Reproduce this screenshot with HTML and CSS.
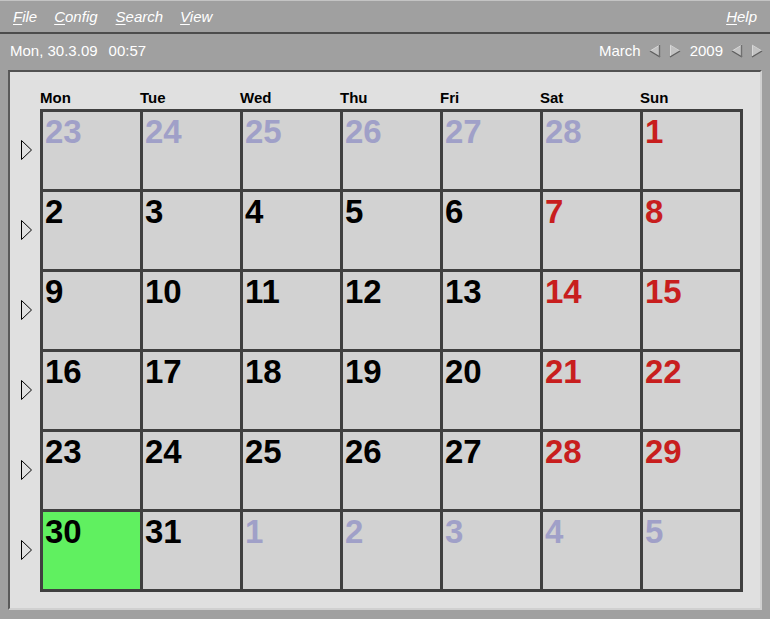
FILE: index.html
```html
<!DOCTYPE html>
<html>
<head>
<meta charset="utf-8">
<link rel="stylesheet" href="styles.css">
</head>
<body>
<div class="menubar">
  <span class="menu m-file"><u>F</u>ile</span>
  <span class="menu m-config"><u>C</u>onfig</span>
  <span class="menu m-search"><u>S</u>earch</span>
  <span class="menu m-view"><u>V</u>iew</span>
  <span class="menu m-help"><u>H</u>elp</span>
</div>
<div class="datebar">
  <span class="date">Mon, 30.3.09</span>
  <span class="time">00:57</span>
  <span class="spacer"></span>
  <span class="month">March</span>
  <svg class="arr" width="12" height="14" viewBox="0 0 12 14"><polygon points="1,7 11,1 11,13" fill="#c2c2c2"/><line x1="1" y1="7" x2="11" y2="1" stroke="#d8d8d8" stroke-width="1"/><line x1="1" y1="7" x2="11" y2="13" stroke="#5e5e5e" stroke-width="1.4"/><line x1="10.5" y1="1" x2="10.5" y2="13" stroke="#707070" stroke-width="1.4"/></svg>
  <svg class="arr" width="12" height="14" viewBox="0 0 12 14"><polygon points="11,7 1,1 1,13" fill="#c2c2c2"/><line x1="1.5" y1="1" x2="1.5" y2="13" stroke="#d8d8d8" stroke-width="1"/><line x1="1" y1="1" x2="11" y2="7" stroke="#d0d0d0" stroke-width="1"/><line x1="1" y1="13" x2="11" y2="7" stroke="#5e5e5e" stroke-width="1.4"/></svg>
  <span class="year">2009</span>
  <svg class="arr" width="12" height="14" viewBox="0 0 12 14"><polygon points="1,7 11,1 11,13" fill="#c2c2c2"/><line x1="1" y1="7" x2="11" y2="1" stroke="#d8d8d8" stroke-width="1"/><line x1="1" y1="7" x2="11" y2="13" stroke="#5e5e5e" stroke-width="1.4"/><line x1="10.5" y1="1" x2="10.5" y2="13" stroke="#707070" stroke-width="1.4"/></svg>
  <svg class="arr" width="12" height="14" viewBox="0 0 12 14"><polygon points="11,7 1,1 1,13" fill="#c2c2c2"/><line x1="1.5" y1="1" x2="1.5" y2="13" stroke="#d8d8d8" stroke-width="1"/><line x1="1" y1="1" x2="11" y2="7" stroke="#d0d0d0" stroke-width="1"/><line x1="1" y1="13" x2="11" y2="7" stroke="#5e5e5e" stroke-width="1.4"/></svg>
</div>
<div class="panel">
  <div class="heads">
    <span class="head">Mon</span><span class="head">Tue</span><span class="head">Wed</span><span class="head">Thu</span><span class="head">Fri</span><span class="head">Sat</span><span class="head">Sun</span>
  </div>
  <div class="body">
    <div class="weeks">
      <div class="wk"><svg width="11" height="20" viewBox="0 0 11 20"><polygon points="0.5,0.5 10.5,10 0.5,19.5" fill="none" stroke="#000" stroke-width="1"/></svg></div>
      <div class="wk"><svg width="11" height="20" viewBox="0 0 11 20"><polygon points="0.5,0.5 10.5,10 0.5,19.5" fill="none" stroke="#000" stroke-width="1"/></svg></div>
      <div class="wk"><svg width="11" height="20" viewBox="0 0 11 20"><polygon points="0.5,0.5 10.5,10 0.5,19.5" fill="none" stroke="#000" stroke-width="1"/></svg></div>
      <div class="wk"><svg width="11" height="20" viewBox="0 0 11 20"><polygon points="0.5,0.5 10.5,10 0.5,19.5" fill="none" stroke="#000" stroke-width="1"/></svg></div>
      <div class="wk"><svg width="11" height="20" viewBox="0 0 11 20"><polygon points="0.5,0.5 10.5,10 0.5,19.5" fill="none" stroke="#000" stroke-width="1"/></svg></div>
      <div class="wk"><svg width="11" height="20" viewBox="0 0 11 20"><polygon points="0.5,0.5 10.5,10 0.5,19.5" fill="none" stroke="#000" stroke-width="1"/></svg></div>
    </div>
    <div class="grid">
      <div class="cell other">23</div><div class="cell other">24</div><div class="cell other">25</div><div class="cell other">26</div><div class="cell other">27</div><div class="cell other">28</div><div class="cell red">1</div>
      <div class="cell">2</div><div class="cell">3</div><div class="cell">4</div><div class="cell">5</div><div class="cell">6</div><div class="cell red">7</div><div class="cell red">8</div>
      <div class="cell">9</div><div class="cell">10</div><div class="cell">11</div><div class="cell">12</div><div class="cell">13</div><div class="cell red">14</div><div class="cell red">15</div>
      <div class="cell">16</div><div class="cell">17</div><div class="cell">18</div><div class="cell">19</div><div class="cell">20</div><div class="cell red">21</div><div class="cell red">22</div>
      <div class="cell">23</div><div class="cell">24</div><div class="cell">25</div><div class="cell">26</div><div class="cell">27</div><div class="cell red">28</div><div class="cell red">29</div>
      <div class="cell today">30</div><div class="cell">31</div><div class="cell other">1</div><div class="cell other">2</div><div class="cell other">3</div><div class="cell other">4</div><div class="cell other">5</div>
    </div>
  </div>
</div>
</body>
</html>
```
FILE: styles.css
```css
html, body {
  margin: 0;
  padding: 0;
}
body {
  background: #a0a0a0;
  width: 770px;
  height: 619px;
  overflow: hidden;
  font-family: "Liberation Sans", Arial, sans-serif;
  font-size: 15px;
  color: #ffffff;
}
.menubar {
  display: flex;
  height: 31px;
  line-height: 31px;
  border-top: 1px solid #c4c4c4;
  border-bottom: 2px solid #4c4c4c;
  padding: 0 13px 0 13px;
}
.menu {
  font-style: italic;
  color: #ffffff;
}
.menu u {
  text-underline-offset: 2px;
}
.m-config { margin-left: 17px; }
.m-search { margin-left: 18px; }
.m-view { margin-left: 17px; }
.m-help { margin-left: auto; }
.datebar {
  display: flex;
  align-items: center;
  height: 36px;
  padding: 0 7px 2px 10px;
  box-sizing: border-box;
  line-height: 34px;
}
.time { margin-left: 11px; }
.spacer { flex: 1; }
.arr { display: block; margin-left: 8px; }
.year { margin-left: 9px; }
.panel {
  margin: 0 8px;
  width: 750px;
  height: 536px;
  background: #e0e0e0;
  border-top: 2px solid #525252;
  border-left: 2px solid #5a5a5a;
  border-right: 2px solid #d0d0d0;
  border-bottom: 2px solid #d0d0d0;
  color: #000;
}
.heads {
  display: flex;
  padding: 18px 0 4px 30px;
  height: 15px;
  line-height: 15px;
  font-weight: bold;
  font-size: 15px;
}
.head {
  width: 100px;
}
.body {
  display: flex;
}
.weeks {
  width: 30px;
  display: flex;
  flex-direction: column;
}
.wk {
  height: 80px;
  padding-top: 1px;
  box-sizing: border-box;
  display: flex;
  align-items: center;
  padding-left: 11px;
}
.wk svg { display: block; }
.grid {
  display: grid;
  grid-template-columns: repeat(7, 97px);
  grid-template-rows: repeat(6, 77px);
  gap: 3px;
  padding: 3px;
  background: #404040;
}
.cell {
  background: #d2d2d2;
  font-weight: bold;
  font-size: 33px;
  line-height: 33px;
  padding: 3px 0 0 2px;
  color: #000;
}
.cell.other { color: #a0a0c8; }
.cell.red { color: #c81e1e; }
.cell.today { background: #60f060; }
```
